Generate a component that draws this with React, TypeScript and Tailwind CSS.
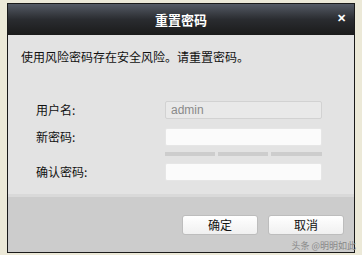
import React from 'react'

const font = { fontFamily: '"Noto Sans CJK SC", "Liberation Sans", sans-serif' }

function Field({ label, value, disabled }: { label: string; value?: string; disabled?: boolean }) {
  return (
    <div className="flex items-center h-[18px]">
      <div className="w-[144px] pl-[15px] text-[12px] text-[#111]">{label}</div>
      <div
        className={
          disabled
            ? 'w-[157px] h-[18px] rounded-[2px] border border-[#d2d2d2] bg-[#e9e9e9] pl-[5px] text-[12px] leading-[16px] text-[#8a8a8a]'
            : 'w-[157px] h-[18px] rounded-[2px] border border-[#e6e6e6] bg-[#fbfbfb]'
        }
        style={disabled ? { fontFamily: '"Liberation Sans", sans-serif' } : undefined}
      >
        {value}
      </div>
    </div>
  )
}

export default function App() {
  return (
    <div className="w-[362px] h-[255px] bg-[#ece9d8] pl-[7px] pt-[3px]" style={font}>
      <div className="w-[348px] h-[250px] border border-[#1a1a1a] flex flex-col bg-[#e3e3e3]">
        {/* title bar */}
        <div className="h-[31px] flex items-center justify-center relative bg-gradient-to-b from-[#555b66] via-[#2a2c30] to-[#1b1b1b]">
          <span className="text-white text-[13px] font-bold">重置密码</span>
          <span className="absolute right-[8px] top-[8px] text-white text-[11px] font-bold leading-none">✕</span>
        </div>

        {/* body */}
        <div className="h-[159px] flex flex-col pl-[13px]">
          <div className="mt-[13px] text-[12px] text-[#111]">使用风险密码存在安全风险。请重置密码。</div>
          <div className="mt-[35px] flex flex-col">
            <Field label="用户名:" value="admin" disabled />
            <div className="mt-[9px]">
              <Field label="新密码:" />
            </div>
            <div className="mt-[6px] ml-[144px] flex gap-[3px]">
              <div className="w-[50px] h-[4px] bg-[#cdcdcd]" />
              <div className="w-[50px] h-[4px] bg-[#cdcdcd]" />
              <div className="w-[51px] h-[4px] bg-[#cdcdcd]" />
            </div>
            <div className="mt-[7px]">
              <Field label="确认密码:" />
            </div>
          </div>
        </div>

        {/* footer */}
        <div className="flex-1 border-t-[3px] border-[#d9d9d9] bg-[#cccccc] relative">
          <div className="flex justify-end gap-[10px] pr-[10px] pt-[18px]">
            <button className="w-[76px] h-[20px] rounded-[3px] bg-gradient-to-b from-white to-[#f0f0f0] border border-[#bdbdbd] text-[12px] text-[#111]">确定</button>
            <button className="w-[76px] h-[20px] rounded-[3px] bg-gradient-to-b from-white to-[#f0f0f0] border border-[#bdbdbd] text-[12px] text-[#111]">取消</button>
          </div>
          <span className="absolute right-[-2px] bottom-[2px] text-[9px] text-[#888] leading-none">头条 @明明如此</span>
        </div>
      </div>
    </div>
  )
}
